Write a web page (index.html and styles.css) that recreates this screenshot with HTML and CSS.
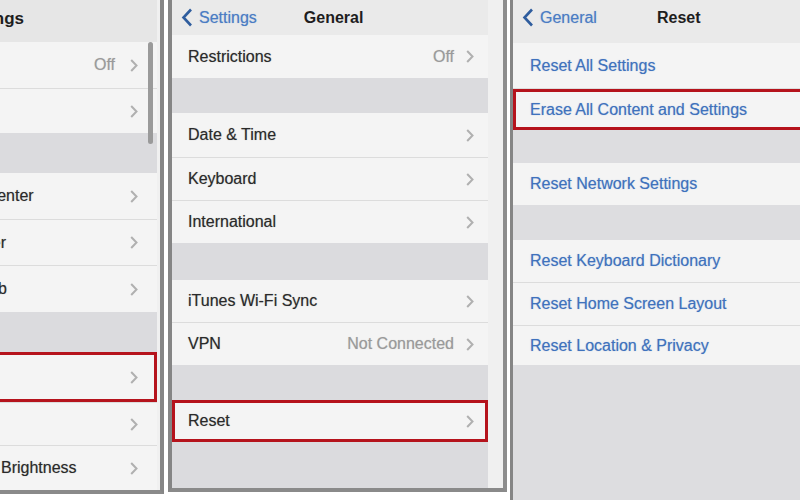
FILE: index.html
```html
<!DOCTYPE html>
<html>

<head>
    <title>Reset iPhone</title>
    <link rel="stylesheet" href="styles.css">
</head>

<body>
    <div class="screens">

        <!-- Settings (left, clipped) -->
        <div class="phone phone-settings">
            <div class="inner">
                <div class="nav nav-settings"><span class="title">Settings</span></div>
                <div class="group">
                    <div class="row h46"><span class="label">Bluetooth</span><span class="value">Off</span><svg class="chev" width="8" height="13" viewBox="0 0 8 13"><path d="M1.2 1l5.3 5.5L1.2 12" /></svg></div>
                    <div class="row h45"><span class="label">Carrier</span><svg class="chev" width="8" height="13" viewBox="0 0 8 13"><path d="M1.2 1l5.3 5.5L1.2 12" /></svg></div>
                </div>
                <div class="gap g40"></div>
                <div class="group">
                    <div class="row h46"><span class="label">Notification Center</span><svg class="chev" width="8" height="13" viewBox="0 0 8 13"><path d="M1.2 1l5.3 5.5L1.2 12" /></svg></div>
                    <div class="row h46"><span class="label">Control Center</span><svg class="chev" width="8" height="13" viewBox="0 0 8 13"><path d="M1.2 1l5.3 5.5L1.2 12" /></svg></div>
                    <div class="row h47"><span class="label">Do Not Disturb</span><svg class="chev" width="8" height="13" viewBox="0 0 8 13"><path d="M1.2 1l5.3 5.5L1.2 12" /></svg></div>
                </div>
                <div class="gap g40"></div>
                <div class="group">
                    <div class="row h50 marked"><span class="label">General</span><svg class="chev" width="8" height="13" viewBox="0 0 8 13"><path d="M1.2 1l5.3 5.5L1.2 12" /></svg></div>
                    <div class="row h43"><span class="label">Sounds</span><svg class="chev" width="8" height="13" viewBox="0 0 8 13"><path d="M1.2 1l5.3 5.5L1.2 12" /></svg></div>
                    <div class="row h45"><span class="label">Wallpapers &amp; Brightness</span><svg class="chev" width="8" height="13" viewBox="0 0 8 13"><path d="M1.2 1l5.3 5.5L1.2 12" /></svg></div>
                </div>
            </div>
            <div class="scrollbar"></div>
        </div>

        <!-- General -->
        <div class="phone phone-general">
            <div class="inner">
                <div class="nav">
                    <span class="back"><svg width="12" height="19" viewBox="0 0 12 19"><path d="M10 1.5L2.5 9.5l7.5 8" /></svg>Settings</span>
                    <span class="title">General</span>
                </div>
                <div class="group">
                    <div class="row h43"><span class="label">Restrictions</span><span class="value">Off</span><svg class="chev" width="8" height="13" viewBox="0 0 8 13"><path d="M1.2 1l5.3 5.5L1.2 12" /></svg></div>
                </div>
                <div class="gap g35"></div>
                <div class="group">
                    <div class="row h44"><span class="label">Date &amp; Time</span><svg class="chev" width="8" height="13" viewBox="0 0 8 13"><path d="M1.2 1l5.3 5.5L1.2 12" /></svg></div>
                    <div class="row h43"><span class="label">Keyboard</span><svg class="chev" width="8" height="13" viewBox="0 0 8 13"><path d="M1.2 1l5.3 5.5L1.2 12" /></svg></div>
                    <div class="row h43"><span class="label">International</span><svg class="chev" width="8" height="13" viewBox="0 0 8 13"><path d="M1.2 1l5.3 5.5L1.2 12" /></svg></div>
                </div>
                <div class="gap g37"></div>
                <div class="group">
                    <div class="row h42"><span class="label">iTunes Wi-Fi Sync</span><svg class="chev" width="8" height="13" viewBox="0 0 8 13"><path d="M1.2 1l5.3 5.5L1.2 12" /></svg></div>
                    <div class="row h43"><span class="label">VPN</span><span class="value">Not Connected</span><svg class="chev" width="8" height="13" viewBox="0 0 8 13"><path d="M1.2 1l5.3 5.5L1.2 12" /></svg></div>
                </div>
                <div class="gap g35"></div>
                <div class="group">
                    <div class="row h42 marked"><span class="label">Reset</span><svg class="chev" width="8" height="13" viewBox="0 0 8 13"><path d="M1.2 1l5.3 5.5L1.2 12" /></svg></div>
                </div>
                <div class="gap fill"></div>
            </div>
        </div>

        <!-- Reset -->
        <div class="phone phone-reset">
            <div class="inner">
                <div class="nav nav-reset">
                    <span class="back"><svg width="12" height="19" viewBox="0 0 12 19"><path d="M10 1.5L2.5 9.5l7.5 8" /></svg>General</span>
                    <span class="title">Reset</span>
                </div>
                <div class="group">
                    <div class="row h45 action"><span class="label">Reset All Settings</span></div>
                    <div class="row h42 action marked"><span class="label">Erase All Content and Settings</span></div>
                </div>
                <div class="gap g33"></div>
                <div class="group">
                    <div class="row h42 action"><span class="label">Reset Network Settings</span></div>
                </div>
                <div class="gap g35"></div>
                <div class="group">
                    <div class="row h42 action"><span class="label">Reset Keyboard Dictionary</span></div>
                    <div class="row h43 action"><span class="label">Reset Home Screen Layout</span></div>
                    <div class="row h40 action"><span class="label">Reset Location &amp; Privacy</span></div>
                </div>
                <div class="gap fill"></div>
            </div>
        </div>

    </div>
</body>

</html>
```

FILE: styles.css
```css
body {
    margin: 0;
    background-color: #fff;
    font-family: "Liberation Sans", Arial, sans-serif;
}

.screens {
    display: flex;
    width: 800px;
    height: 500px;
    overflow: hidden;
    align-items: flex-start;
}

.phone {
    position: relative;
    overflow: hidden;
    background-color: #f0f0f0;
    box-sizing: border-box;
}

.inner {
    display: flex;
    flex-direction: column;
    height: 100%;
}

/* left screen, cut off on the left */
.phone-settings {
    width: 164px;
    height: 494px;
    padding-right: 3px;
    border-right: 4px solid #858585;
    border-bottom: 4px solid #8a8a8a;
    margin-right: 4px;
}

.phone-settings .inner {
    margin-left: -113px;
}

.phone-general {
    width: 339px;
    height: 492px;
    padding-right: 15px;
    border-left: 4px solid #858585;
    border-right: 4px solid #8d8d8d;
    border-bottom: 4px solid #8a8a8a;
    margin-right: 3px;
}

.phone-reset {
    flex: 1;
    height: 500px;
    border-left: 3px solid #858585;
    background-color: #dddde0;
}

.nav {
    display: flex;
    align-items: flex-start;
    padding-top: 9px;
    box-sizing: border-box;
    height: 35px;
    background-color: #eaeaea;
    font-size: 16px;
    position: relative;
}

.nav-settings {
    height: 42px;
    padding-left: 70px;
    background-color: #e6e6e6;
}

.nav-reset {
    height: 43px;
}

.nav .title {
    font-weight: bold;
    color: #1e1e1e;
    font-size: 16px;
}

.nav-settings .title {
    font-size: 17px;
}

.back {
    display: flex;
    align-items: center;
    color: #4a7cc4;
    margin-left: 9px;
    margin-top: -1px;
    text-shadow: 0 0 1px rgba(74, 124, 196, 0.5);
}

.back svg {
    margin-right: 6px;
}

.back path {
    fill: none;
    stroke: #2f5d9e;
    stroke-width: 2.6;
}

.phone-general .title {
    margin-left: 47px;
}

.phone-reset .title {
    margin-left: 60px;
}

.group {
    background-color: #f4f4f4;
}

.row {
    display: flex;
    align-items: center;
    padding: 0 20px 0 16px;
    box-sizing: border-box;
    font-size: 16px;
    color: #2a2a2a;
    text-shadow: 0 0 1px rgba(0, 0, 0, 0.35);
}

.row + .row {
    border-top: 1px solid #dcdcdc;
}

.row .label {
    flex: 1;
    white-space: nowrap;
}

.row .value {
    color: #9a9a9a;
    margin-right: 12px;
    text-shadow: 0 0 1px rgba(0, 0, 0, 0.2);
}

.chev path {
    fill: none;
    stroke: #b0b0b0;
    stroke-width: 2;
}

.phone-general .row {
    padding-right: 14px;
}

.action {
    color: #3f72bd;
    padding-left: 17px;
    text-shadow: 0 0 1px rgba(63, 114, 189, 0.5);
}

.marked {
    box-shadow: inset 0 0 0 3px #b5131c;
}

.phone-settings .marked {
    box-shadow: inset 0 3px 0 #b5131c, inset -3px 0 0 #b5131c, inset 0 -3px 0 #b5131c;
}

.phone-settings .row {
    padding-right: 19px;
    padding-left: 15px;
}

.phone-settings .row .value {
    margin-right: 15px;
}

.phone-reset .marked {
    box-shadow: inset 0 3px 0 #b5131c, inset 3px 0 0 #b5131c, inset 0 -3px 0 #b5131c;
}

.gap {
    background-color: #dbdbde;
}

.fill {
    flex: 1;
}

.phone-reset .gap {
    background-color: #dddde0;
}

.scrollbar {
    position: absolute;
    left: 148px;
    top: 42px;
    width: 5px;
    height: 102px;
    border-radius: 3px;
    background-color: #9a9a9a;
}

.h40 { height: 40px; }
.h42 { height: 42px; }
.h43 { height: 43px; }
.h44 { height: 44px; }
.h45 { height: 45px; }
.h46 { height: 46px; }
.h47 { height: 47px; }
.h50 { height: 50px; }

.g33 { height: 33px; }
.g35 { height: 35px; }
.g37 { height: 37px; }
.g40 { height: 40px; }
```
